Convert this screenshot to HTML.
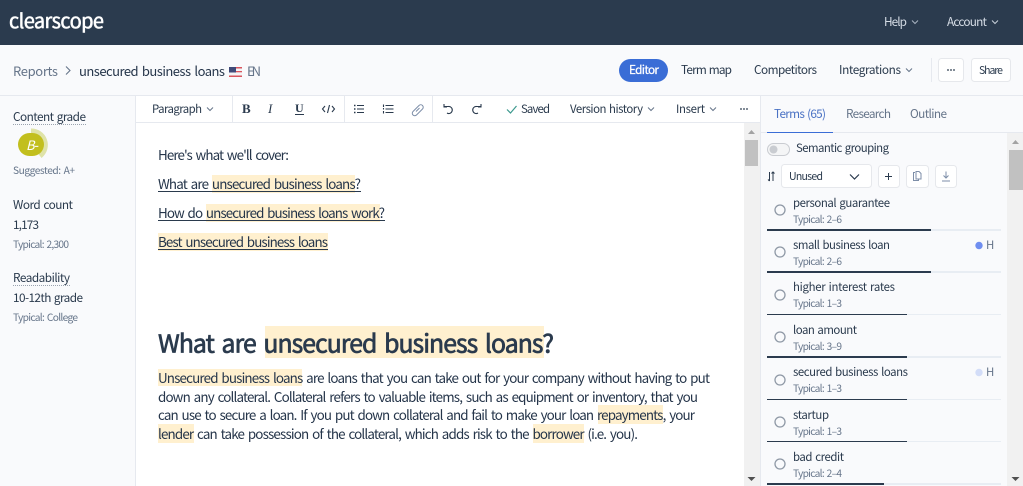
<!DOCTYPE html>
<html><head><meta charset="utf-8"><style>
html,body{margin:0;padding:0;width:1023px;height:486px;overflow:hidden;background:#fff}
svg{display:block}
text{font-family:"Noto Sans CJK JP","Liberation Sans",sans-serif;font-size:12px;fill:#2a3a4d;white-space:pre;word-spacing:1px}
.b{font-size:13.4px;fill:#25354a;word-spacing:1.6px}
.s{font-size:10.2px;fill:#66758a;word-spacing:1.2px}
.t{font-size:11.8px}
.n{font-size:11.4px}
.i{fill:none;stroke:#2a3a4d;stroke-width:1.1}
.c{fill:none;stroke:#66758a;stroke-width:1}
</style></head><body>
<svg width="1023" height="486" viewBox="0 0 1023 486" xmlns="http://www.w3.org/2000/svg">
<rect width="1023" height="486" fill="#fff"/>
<rect width="1023" height="45" fill="#2b3b4e"/>
<rect y="45" width="1023" height="50" fill="#f9fafc"/>
<rect y="95" width="1023" height="1" fill="#e6e9ef"/>
<rect y="96" width="135" height="390" fill="#f9fafc"/>
<rect x="135" y="96" width="1" height="390" fill="#e6e9ef"/>
<rect x="761" y="96" width="262" height="390" fill="#f9fafc"/>
<rect x="760" y="96" width="1" height="390" fill="#e6e9ef"/>
<rect x="136" y="122" width="624" height="1" fill="#e6e9ef"/>
<rect x="761" y="132" width="262" height="1" fill="#e6e9ef"/>

<!-- header -->
<text x="9" y="28" textLength="95" style="font-size:20px;fill:#fff;stroke:#fff;stroke-width:.5">clearscope</text>
<text x="884" y="26" textLength="23" class="t" style="fill:#d5dce5">Help</text>
<path d="M912 20.5l3 3 3-3" fill="none" stroke="#a8b3c0"/>
<text x="947" y="26" textLength="40" class="t" style="fill:#d5dce5">Account</text>
<path d="M992 20.5l3 3 3-3" fill="none" stroke="#c8d0da"/>

<!-- sub bar -->
<text x="13" y="76" textLength="45" style="font-size:13px;fill:#66758a">Reports</text>
<path d="M66 66.5l4 4-4 4" fill="none" stroke="#66758a" stroke-width="1.1"/>
<text x="79" y="76" textLength="146" style="font-size:13px;fill:#25354a;word-spacing:1.5px">unsecured business loans</text>
<rect x="229" y="67" width="13" height="10" fill="#f4f4f6"/>
<rect x="229" y="67" width="13" height="1.5" fill="#d9565f"/>
<rect x="229" y="71" width="13" height="1.3" fill="#d9565f"/>
<rect x="229" y="75.5" width="13" height="1.5" fill="#d9565f"/>
<rect x="229" y="67" width="7" height="5.5" fill="#3f4a78"/>
<text x="247" y="76" textLength="14" style="font-size:13px;fill:#66758a">EN</text>

<rect x="619" y="59" width="49" height="23" rx="11.5" fill="#3a6dd6"/>
<text x="629" y="74" textLength="30" class="t" style="fill:#fff;stroke:#fff;stroke-width:.25">Editor</text>
<text x="681" y="74" textLength="51" class="t">Term map</text>
<text x="754" y="74" textLength="63" class="t">Competitors</text>
<text x="839" y="74" textLength="62" class="t">Integrations</text>
<path d="M906 68.5l3 3 3-3" class="c"/>
<rect x="931" y="58" width="1" height="24" fill="#e6e9ef"/>
<rect x="938.5" y="58.5" width="25" height="23" rx="3" fill="#fff" stroke="#e6e8ec"/>
<circle cx="948" cy="70" r=".9" fill="#2a3a4d"/><circle cx="951" cy="70" r=".9" fill="#2a3a4d"/><circle cx="954" cy="70" r=".9" fill="#2a3a4d"/>
<rect x="971.5" y="58.5" width="39" height="23" rx="3" fill="#fff" stroke="#e6e8ec"/>
<text x="979" y="74" textLength="24" style="font-size:10.5px">Share</text>

<!-- toolbar -->
<text x="152" y="113" textLength="50" class="n">Paragraph</text>
<path d="M207 107.500l3 3 3-3" class="c"/>
<rect x="232" y="96" width="1" height="26" fill="#e6e9ef"/>
<text x="242" y="113" textLength="9" style="font-family:'Liberation Serif',serif;font-size:13px;font-weight:bold">B</text>
<text x="268" y="113" textLength="6" style="font-family:'Liberation Serif',serif;font-size:13px;font-style:italic">I</text>
<text x="295" y="112" textLength="9" style="font-family:'Liberation Serif',serif;font-size:12px;font-weight:bold">U</text>
<rect x="295" y="114" width="9" height="1" fill="#2a3a4d"/>
<path d="M325 106l-2.500 3 2.500 3M332 106l2.500 3-2.500 3M329.500 105l-2 8" class="i"/>
<rect x="344" y="96" width="1" height="26" fill="#e6e9ef"/>
<path d="M357 105.500h7M357 109h7M357 112.500h7" class="i"/>
<path d="M354 105.500h1.500M354 109h1.500M354 112.500h1.500" class="i" style="stroke-width:1.500"/>
<path d="M385.500 105.500h8M385.500 109h8M385.500 112.500h8M383.500 104.500v2.500M383.500 108v1.500M383.500 111v2.500" class="i"/>
<path d="M416 111.500l3.500-3.500M414.500 110l-1.500 1.500a2.400 2.400 0 0 0 3.500 3.500l1.500-1.500M417.500 107l1.500-1.500a2.400 2.400 0 0 1 3.500 3.500l-1.500 1.500M414.500 110l3-3M418 113.500l3-3" fill="none" stroke="#7d8ea8" stroke-width="1"/>
<rect x="432" y="96" width="1" height="26" fill="#e6e9ef"/>
<path d="M444 106.500h4.500a3.500 3.500 0 1 1-1.500 6.500M444 104v3h3" class="i"/>
<path d="M481 106.500h-4.500a3.500 3.500 0 1 0 1.500 6.500M481 104v3h-3" class="i"/>
<path d="M507 109.500l3.500 3.500 6-7" fill="none" stroke="#3e9a8f" stroke-width="1.200"/>
<text x="521" y="113" textLength="29" class="n">Saved</text>
<text x="570" y="113" textLength="73" class="n">Version history</text>
<path d="M648 107.500l3 3 3-3" class="c"/>
<text x="676" y="113" textLength="29" class="n">Insert</text>
<path d="M710 107.500l3 3 3-3" class="c"/>
<circle cx="741" cy="109" r=".9" fill="#2a3a4d"/><circle cx="744" cy="109" r=".9" fill="#2a3a4d"/><circle cx="747" cy="109" r=".9" fill="#2a3a4d"/>

<!-- left -->
<text x="13" y="121" textLength="73" class="t">Content grade</text>
<path d="M13 124.500h73" stroke="#9aa3af" stroke-dasharray="1 1"/>
<path d="M31 131a14 14 0 0 1 9 25" fill="none" stroke="#dfe3a8" stroke-width="5"/>
<rect x="18" y="133" width="26" height="23" rx="11.500" fill="#c2bf1e"/>
<text x="26" y="150" textLength="12" style="font-size:13px;font-style:italic;fill:#fff">B-</text>
<text x="13" y="174" textLength="62" class="s">Suggested: A+</text>
<text x="13" y="209" textLength="60" class="t">Word count</text>
<text x="13" y="229" textLength="26" class="t">1,173</text>
<text x="13" y="248" textLength="56" class="s">Typical: 2,300</text>
<text x="13" y="282" textLength="57" class="t">Readability</text>
<path d="M13 285.500h57" stroke="#9aa3af" stroke-dasharray="1 1"/>
<text x="13" y="302" textLength="70" class="t">10-12th grade</text>
<text x="13" y="321" textLength="65" class="s">Typical: College</text>

<!-- editor -->
<g fill="#fff0cf">
<rect x="212" y="175" width="143" height="18"/>
<rect x="206" y="204" width="174" height="18"/>
<rect x="158" y="233" width="170" height="18"/>
<rect x="265" y="326" width="279" height="32"/>
<rect x="158" y="369" width="144" height="17"/>
<rect x="598" y="405" width="65" height="19"/>
<rect x="158" y="424" width="36" height="19"/>
<rect x="533" y="424" width="51" height="19"/>
</g>
<text x="158" y="160" textLength="131" class="b">Here's what we'll cover:</text>
<text x="158" y="189" textLength="203" class="b">What are unsecured business loans?</text>
<rect x="158" y="191" width="203" height="1" fill="#2a3a4d"/>
<text x="158" y="218" textLength="227" class="b">How do unsecured business loans work?</text>
<rect x="158" y="220" width="227" height="1" fill="#2a3a4d"/>
<text x="158" y="247" textLength="170" class="b">Best unsecured business loans</text>
<rect x="158" y="249" width="170" height="1" fill="#2a3a4d"/>
<text x="158" y="352.500" textLength="396" style="font-size:24.800px;stroke:#2a3a4d;stroke-width:.7;word-spacing:3px">What are unsecured business loans?</text>
<text x="158" y="383" textLength="552" class="b">Unsecured business loans are loans that you can take out for your company without having to put</text>
<text x="158" y="402" textLength="540" class="b">down any collateral. Collateral refers to valuable items, such as equipment or inventory, that you</text>
<text x="158" y="420" textLength="537" class="b">can use to secure a loan. If you put down collateral and fail to make your loan repayments, your</text>
<text x="158" y="439" textLength="480" class="b">lender can take possession of the collateral, which adds risk to the borrower (i.e. you).</text>

<!-- editor scrollbar -->
<rect x="744" y="123" width="16" height="363" fill="#f1f1f1"/>
<rect x="745" y="140" width="13" height="26" fill="#c1c1c1"/>
<path d="M748 134l3.500-4 3.500 4z" fill="#a3a3a3"/>
<path d="M747.500 477h8l-4 4z" fill="#505050"/>

<!-- right -->
<text x="774" y="118" textLength="52" class="t" style="fill:#4a72c4">Terms (65)</text>
<rect x="767" y="132" width="66" height="1" fill="#3a6dd6"/>
<text x="846" y="118" textLength="45" class="t" style="fill:#66758a">Research</text>
<text x="910" y="118" textLength="37" class="t" style="fill:#66758a">Outline</text>
<rect x="767.500" y="143.500" width="22" height="12" rx="6" fill="#f4f5f6" stroke="#c9ccd1"/>
<circle cx="773.500" cy="149.500" r="4" fill="#c9ccd1"/>
<text x="796" y="152" textLength="93" class="n">Semantic grouping</text>
<path d="M769.500 172v9M768 179.500l1.500 1.500M773 181v-9M771.500 173.500l1.500-1.500 1.500 1.500" fill="none" stroke="#2a3a4d"/>
<rect x="781.500" y="164.500" width="90" height="23" rx="3" fill="#fff" stroke="#e6e8ec"/>
<text x="789" y="180" textLength="34" style="font-size:10.500px">Unused</text>
<path d="M850 174.500l4.500 4.500 4.500-4.500" fill="none" stroke="#2a3a4d" stroke-width="1.200"/>
<rect x="878.500" y="165.500" width="21" height="22" rx="3" fill="#fff" stroke="#e6e8ec"/>
<path d="M885 176.500h7M888.500 173v7" fill="none" stroke="#2a3a4d" stroke-width="1"/>
<rect x="906.500" y="165.500" width="22" height="22" rx="3" fill="#fff" stroke="#e6e8ec"/>
<path d="M915 172.500h-1.500v8h5v-1.500M916 171.500h3l2 2v5.500h-5z" fill="none" stroke="#7d8ea8"/>
<rect x="935.500" y="165.500" width="21" height="22" rx="3" fill="#fff" stroke="#e6e8ec"/>
<path d="M946 171.500v6M943.500 175.500l2.500 2.500 2.500-2.500M942 181h8" fill="none" stroke="#7d8ea8"/>

<!-- terms -->
<g class="rows">
<text x="793" y="207" textLength="97" class="n">personal guarantee</text>
<text x="793" y="223" textLength="49" class="s">Typical: 2–6</text>
<text x="793" y="249" textLength="97" class="n">small business loan</text>
<text x="793" y="265" textLength="49" class="s">Typical: 2–6</text>
<text x="793" y="291" textLength="102" class="n">higher interest rates</text>
<text x="793" y="307" textLength="49" class="s">Typical: 1–3</text>
<text x="793" y="334" textLength="64" class="n">loan amount</text>
<text x="793" y="350" textLength="49" class="s">Typical: 3–9</text>
<text x="793" y="376" textLength="115" class="n">secured business loans</text>
<text x="793" y="392" textLength="49" class="s">Typical: 1–3</text>
<text x="793" y="419" textLength="36" class="n">startup</text>
<text x="793" y="435" textLength="49" class="s">Typical: 1–3</text>
<text x="793" y="461" textLength="51" class="n">bad credit</text>
<text x="793" y="477" textLength="49" class="s">Typical: 2–4</text>
</g>
<g fill="none" stroke="#8f99a6" stroke-width="1.300">
<circle cx="780" cy="210" r="5"/><circle cx="780" cy="252" r="5"/><circle cx="780" cy="295" r="5"/>
<circle cx="780" cy="337" r="5"/><circle cx="780" cy="380" r="5"/><circle cx="780" cy="422" r="5"/><circle cx="780" cy="464" r="5"/>
</g>
<circle cx="979" cy="245.500" r="3.700" fill="#6f8ef0"/>
<text x="986" y="249" textLength="8" class="n" style="fill:#66758a">H</text>
<circle cx="979" cy="372.500" r="3.700" fill="#d3ddf8"/>
<text x="986" y="376" textLength="8" class="n" style="fill:#66758a">H</text>

<g fill="#e8edf3">
<rect x="767" y="229" width="234" height="2"/>
<rect x="767" y="271" width="234" height="2"/>
<rect x="767" y="314" width="234" height="1"/>
<rect x="767" y="356" width="234" height="2"/>
<rect x="767" y="399" width="234" height="1"/>
<rect x="767" y="441" width="234" height="1"/>
<rect x="767" y="483" width="234" height="2"/>
</g>
<g fill="#2b3b4e">
<rect x="767" y="229" width="164" height="2"/>
<rect x="767" y="271" width="164" height="2"/>
<rect x="767" y="314" width="140" height="1"/>
<rect x="767" y="356" width="140" height="2"/>
<rect x="767" y="399" width="140" height="1"/>
<rect x="767" y="441" width="140" height="1"/>
<rect x="767" y="483" width="117" height="2"/>
</g>

<!-- right scrollbar -->
<rect x="1007" y="133" width="16" height="353" fill="#f1f1f1"/>
<rect x="1009" y="150" width="14" height="40" fill="#c1c1c1"/>
<path d="M1012 144l3.500-4 3.500 4z" fill="#a3a3a3"/>
<path d="M1011.500 477h8l-4 4z" fill="#505050"/>
</svg>
</body></html>
